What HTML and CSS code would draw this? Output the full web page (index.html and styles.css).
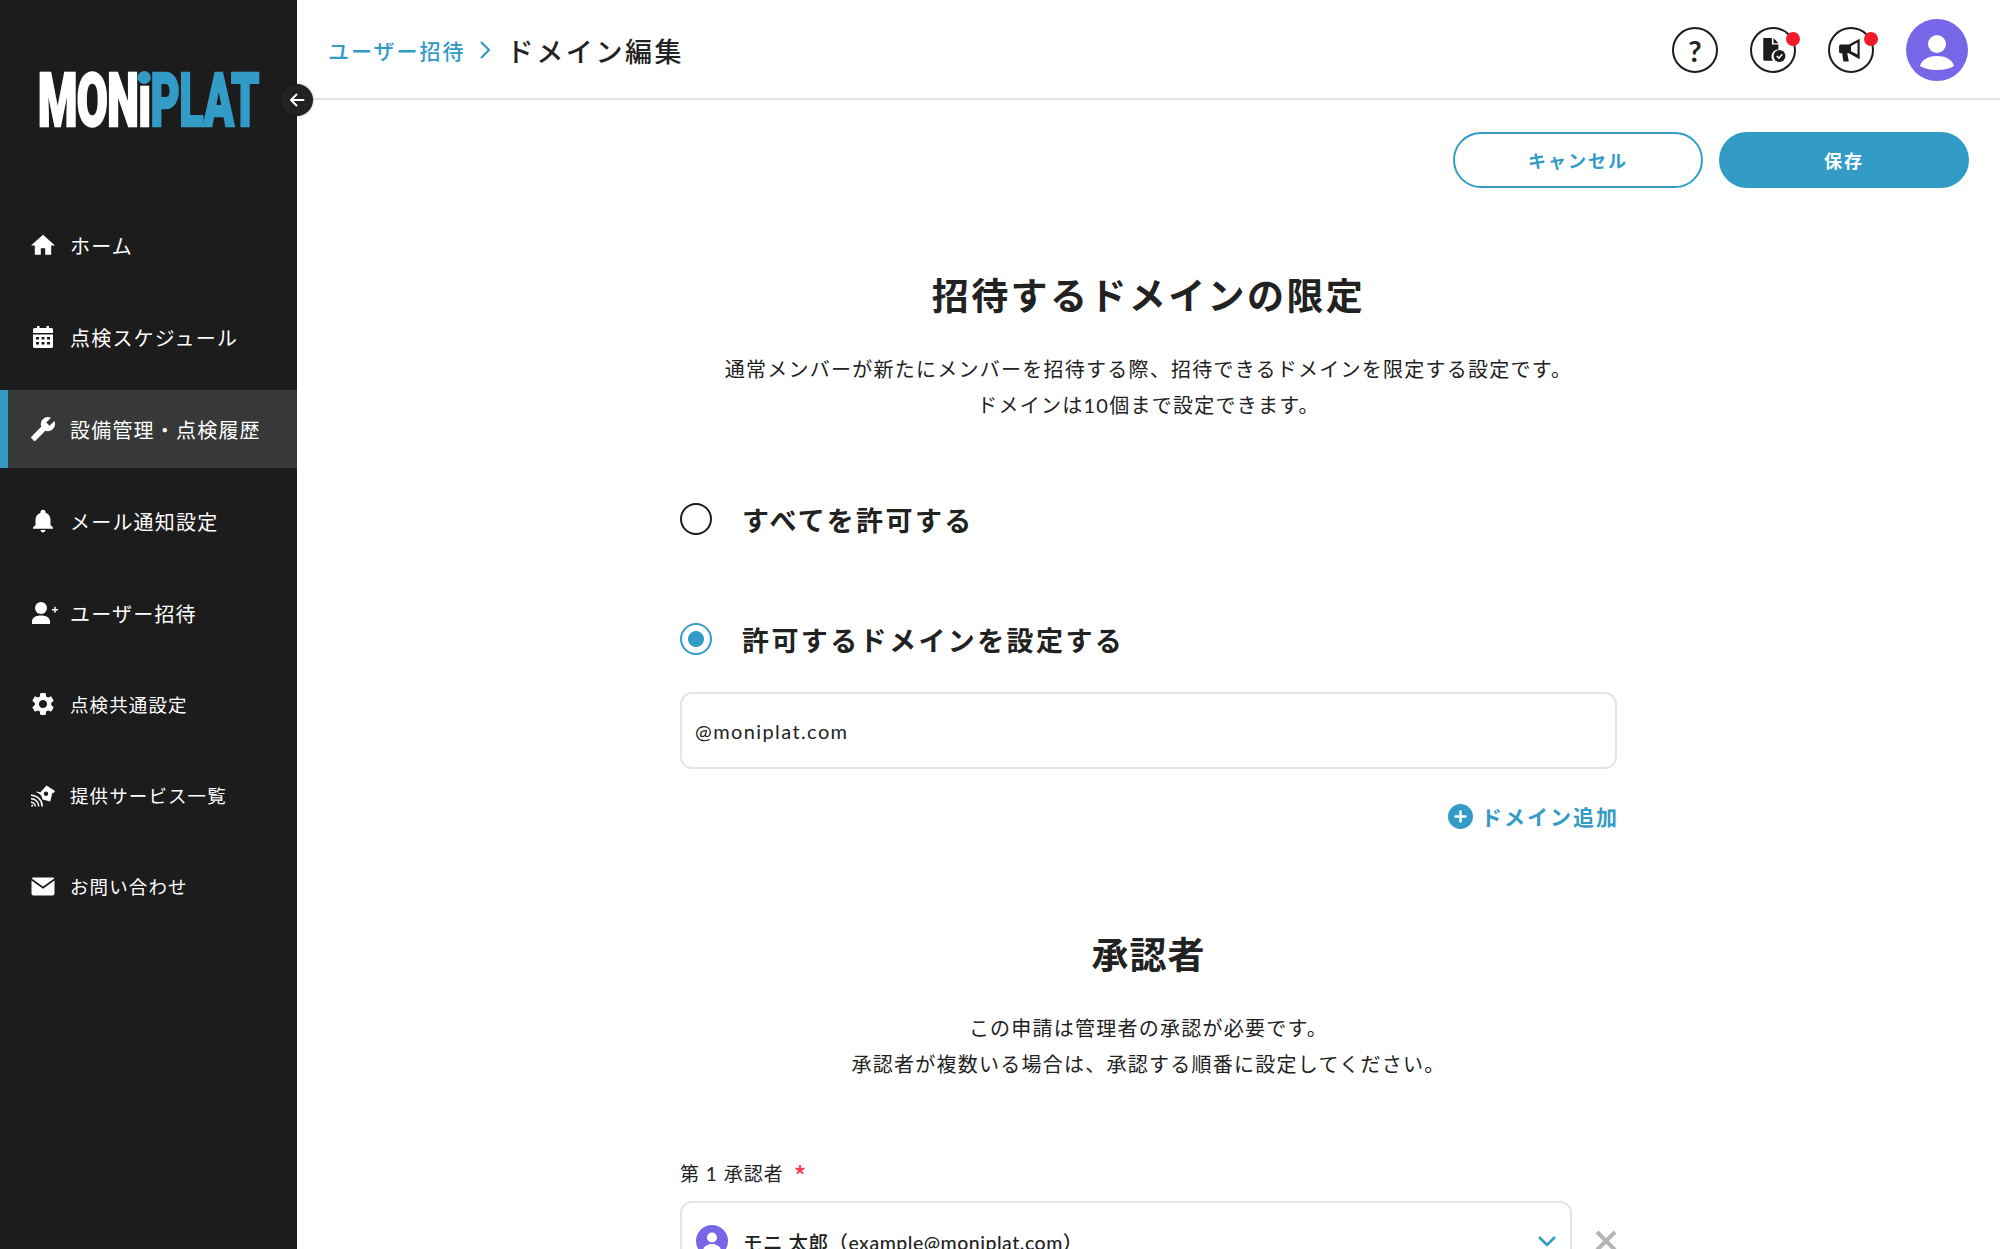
FILE: index.html
```html
<!DOCTYPE html>
<html lang="ja">
<head>
<meta charset="utf-8">
<title>ドメイン編集</title>
<link rel="stylesheet" href="styles.css">
</head>
<body>
<div class="app">
  <aside class="sidebar">
    <div class="logo"><span class="logo-word"><span class="logo-white">MON<span class="logo-i">ı</span></span><span class="logo-blue">PLAT</span></span></div>
    <nav class="nav">
      <a class="nav-item"><svg class="nav-icon" viewBox="1 1 22 22"><path d="M10 21v-6h4v6h5.500v-8.500H23L12 2.500 1 12.500h3.500V21z"/></svg><span>ホーム</span></a>
      <a class="nav-item"><svg class="nav-icon" viewBox="0 0 24 24"><path fill-rule="evenodd" d="M6 1h2.500v2h7V1H18v2h2.500A1.500 1.500 0 0 1 22 4.500V8H2V4.500A1.500 1.500 0 0 1 3.500 3H6zM2 9.500h20v12a1.500 1.500 0 0 1-1.500 1.500h-17A1.500 1.500 0 0 1 2 21.500zM5 12v2.500h3V12zm5.500 0v2.500h3V12zm5.500 0v2.500h3V12zM5 17v2.500h3V17zm5.500 0v2.500h3V17zm5.500 0v2.500h3V17z"/></svg><span>点検スケジュール</span></a>
      <a class="nav-item is-active"><svg class="nav-icon" viewBox="1 1 22 22"><path transform="matrix(-1 0 0 1 24 0)" d="M22.700 19l-9.100-9.100c.9-2.300.4-5-1.500-6.900-2-2-5-2.400-7.400-1.300L9 6 6 9 1.600 4.700C.4 7.100.9 10.100 2.900 12.100c1.900 1.900 4.600 2.400 6.900 1.500l9.100 9.100c.4.400 1 .4 1.400 0l2.300-2.300c.5-.4.5-1.100.1-1.400z"/></svg><span>設備管理・点検履歴</span></a>
      <a class="nav-item"><svg class="nav-icon" viewBox="0 0 24 24"><path d="M12 23.500c1.300 0 2.400-1 2.400-2.500H9.600c0 1.500 1.100 2.500 2.400 2.500zm7.500-7.500v-5c0-3.400-1.800-6.200-4.900-6.900v-.7C14.600 2 13.500.8 12 .8S9.400 2 9.400 3.400v.7C6.300 4.800 4.500 7.600 4.500 11v5L2 18.500v1.200h20v-1.200z"/></svg><span>メール通知設定</span></a>
      <a class="nav-item"><svg class="nav-icon nav-icon-wide" viewBox="0 0 27 24"><circle cx="10" cy="7" r="6"/><path d="M1 23v-2.500C1 16.500 5 14.500 10 14.500s9 2 9 6V23zM21 8h2.300V5.700h1.400V8H27v1.400h-2.300v2.300h-1.400V9.400H21z"/></svg><span>ユーザー招待</span></a>
      <a class="nav-item nav-item-compact"><svg class="nav-icon" viewBox="2 1.500 20 21"><path d="M19.140 12.940c.04-.3.06-.61.06-.94 0-.32-.02-.64-.07-.94l2.030-1.580c.18-.14.23-.41.12-.61l-1.920-3.320c-.12-.22-.37-.29-.59-.22l-2.390.96c-.5-.38-1.030-.7-1.620-.94l-.36-2.540c-.04-.24-.24-.41-.48-.41h-3.840c-.24 0-.43.17-.47.41l-.36 2.540c-.59.24-1.130.57-1.620.94l-2.390-.96c-.22-.08-.47 0-.59.22L2.740 8.870c-.12.21-.08.47.12.61l2.030 1.580c-.05.3-.09.63-.09.94s.02.64.07.94l-2.030 1.580c-.18.14-.23.41-.12.61l1.920 3.320c.12.22.37.29.59.22l2.390-.96c.5.38 1.030.7 1.620.94l.36 2.540c.05.24.24.41.48.41h3.840c.24 0 .44-.17.47-.41l.36-2.540c.59-.24 1.130-.56 1.620-.94l2.390.96c.22.08.47 0 .59-.22l1.920-3.320c.12-.22.07-.47-.12-.61l-2.010-1.580zM12 15.600c-1.980 0-3.600-1.620-3.600-3.600s1.620-3.600 3.600-3.600 3.600 1.620 3.600 3.600-1.620 3.600-3.600 3.600z"/></svg><span>点検共通設定</span></a>
      <a class="nav-item nav-item-compact"><svg class="nav-icon" viewBox="0 0 24 24"><path fill-rule="evenodd" d="M15.500 2.500 24 8l-1.500 2.200-1-.6-2.300 9-7.700-2.100C11 12.500 8.500 10 5.500 9.500l-.2-.9 4.200.6zM15 8.500a2.200 2.200 0 1 0 0 4.400 2.200 2.200 0 0 0 0-4.400z"/><path d="M0 23.500a2 2 0 0 1 2-2v2zM0 18.500a5 5 0 0 1 5 5H3.500A3.500 3.500 0 0 0 0 20zM0 15a8.500 8.500 0 0 1 8.500 8.500H7A7 7 0 0 0 0 16.500zM0 11.500a12 12 0 0 1 12 12h-1.500A10.500 10.500 0 0 0 0 13z"/></svg><span>提供サービス一覧</span></a>
      <a class="nav-item nav-item-compact"><svg class="nav-icon" viewBox="0 0 24 24"><path d="M2.500 3.500h19c.8 0 1.500.4 1.800 1L12 12.500.7 4.500c.3-.6 1-1 1.800-1zM.5 6.500 12 14.700 23.500 6.500v13c0 1.100-.9 2-2 2h-19c-1.100 0-2-.9-2-2z"/></svg><span>お問い合わせ</span></a>
    </nav>
    <button class="collapse" aria-label="閉じる"><svg viewBox="0 0 18 18"><path d="M15.500 9H3M8.500 3.500 3 9l5.500 5.500" fill="none" stroke="#fff" stroke-width="2" stroke-linecap="round" stroke-linejoin="round"/></svg></button>
  </aside>
  <main class="main">
    <header class="topbar">
      <div class="crumbs"><a class="crumb-link">ユーザー招待</a><svg class="crumb-sep" viewBox="0 0 12 20"><path d="M2 2l8 8-8 8" fill="none" stroke="#329bc6" stroke-width="2.200"/></svg><span class="crumb-current">ドメイン編集</span></div>
      <div class="tools">
        <span class="tool tool-help">?</span>
        <span class="tool has-dot"><svg viewBox="0 0 24 24" class="tool-icon"><path d="M3 1h8v6h6v4.500a6.500 6.500 0 0 0-5 10.500H4.500A1.500 1.500 0 0 1 3 20.500zM12.500 1l4.500 4.800h-4.500z" fill="#1c1c1c"/><circle cx="18" cy="17.500" r="5.500" fill="#1c1c1c"/><path d="M15.500 17.500l2 2 3-3.500" fill="none" stroke="#fff" stroke-width="1.400"/></svg></span>
        <span class="tool has-dot"><svg viewBox="0 0 24 24" class="tool-icon"><path d="M1 8.500A1.500 1.500 0 0 1 2.500 7H10l10-5.500v19L10 15H8.500l1.500 7.500H5L3.800 15h-1.300A1.500 1.500 0 0 1 1 13.500z" fill="#1c1c1c"/><path d="M12 8.200 18 5v11.200l-6-3z" fill="#fff"/></svg></span>
        <span class="avatar"><svg viewBox="0 0 62 62"><circle cx="31" cy="25" r="9"/><path d="M14 47c2-7 9-10 17-10s15 3 17 10c-4 2.500-10 4-17 4s-13-1.500-17-4z"/></svg></span>
      </div>
    </header>
    <div class="actions">
      <button class="btn btn-outline">キャンセル</button>
      <button class="btn btn-solid">保存</button>
    </div>
    <section class="form">
      <h1 class="title">招待するドメインの限定</h1>
      <p class="desc">通常メンバーが新たにメンバーを招待する際、招待できるドメインを限定する設定です。<br>ドメインは10個まで設定できます。</p>
      <label class="radio radio-first"><span class="radio-mark"></span><span>すべてを許可する</span></label>
      <label class="radio radio-second"><span class="radio-mark is-on"></span><span>許可するドメインを設定する</span></label>
      <div class="input">@moniplat.com</div>
      <div class="add-row"><a class="add"><svg viewBox="0 0 25 25"><circle cx="12.500" cy="12.500" r="12.500" fill="#329bc6"/><path d="M12.500 7.500v10M7.500 12.500h10" stroke="#fff" stroke-width="2.600" stroke-linecap="round"/></svg><span>ドメイン追加</span></a></div>
      <h2 class="title title-second">承認者</h2>
      <p class="desc">この申請は管理者の承認が必要です。<br>承認者が複数いる場合は、承認する順番に設定してください。</p>
      <div class="field-label">第 1 承認者 <span class="req">*</span></div>
      <div class="select-row">
        <div class="select">
          <span class="mini-avatar"><svg viewBox="0 0 32 32"><circle cx="16" cy="12.500" r="5"/><path d="M7 25c1-4 5-6 9-6s8 2 9 6c-2.500 1.500-5.500 2.200-9 2.200S9.500 26.500 7 25z"/></svg></span>
          <span class="select-text">モニ 太郎（example@moniplat.com）</span>
          <svg class="chevron" viewBox="0 0 20 12"><path d="M2 2l8 8 8-8" fill="none" stroke="#329bc6" stroke-width="2.600"/></svg>
        </div>
        <svg class="remove" viewBox="0 0 24 24"><path d="M3 3l18 18M21 3L3 21" stroke="#b5b5b5" stroke-width="4"/></svg>
      </div>
    </section>
  </main>
</div>
</body>
</html>
```

FILE: styles.css
```css
* { box-sizing: border-box; }
html, body { margin: 0; height: 1249px; overflow: hidden; }
body { background: #fff; color: #222; font-family: Lato, "Noto Sans CJK JP", sans-serif; }
.app { display: flex; height: 1249px; }

.sidebar { position: relative; flex: 0 0 297px; background: #1c1c1c; display: flex; flex-direction: column; }
.logo { height: 206px; padding: 73px 0 0 38px; }
.logo-word { display: block; width: 219px; height: 54px; font: 900 75px/54px Roboto, sans-serif; white-space: nowrap; transform-origin: 0 0; transform: scaleX(.6); letter-spacing: -1px; -webkit-text-stroke: 2.500px currentColor; }
.logo-white { color: #fff; }
.logo-blue { color: #329bc6; }
.logo-i { position: relative; }
.logo-i::after { content: ""; position: absolute; left: -1px; top: 15px; width: 22px; height: 13px; border-radius: 50%; background: #329bc6; }
.nav { display: flex; flex-direction: column; gap: 14px; }
.nav-item { height: 78px; display: flex; align-items: center; gap: 15px; padding-left: 31px; color: #fff; font-size: 20px; letter-spacing: 1.200px; }
.nav-item-compact { font-size: 18.500px; letter-spacing: 1.100px; margin-top: -1px; }
.nav-item.is-active { background: #383838; box-shadow: inset 8px 0 0 #329bc6; }
.nav-icon { width: 24px; height: 24px; fill: #fff; flex: none; }
.nav-icon-wide { width: 27px; margin-right: -3px; }
.collapse { position: absolute; left: 281px; top: 84px; width: 32px; height: 32px; padding: 7px; border: 0; border-radius: 50%; background: #222; box-shadow: 0 0 3px rgba(0,0,0,.3); display: flex; z-index: 2; }
.collapse svg { width: 18px; height: 18px; }

.main { flex: 1; min-width: 0; }
.topbar { height: 100px; border-bottom: 2px solid #e3e3e3; display: flex; align-items: center; justify-content: space-between; padding: 2px 32px 0 31px; }
.crumbs { display: flex; align-items: center; }
.crumb-link { color: #329bc6; font-size: 21px; font-weight: 500; letter-spacing: 2px; }
.crumb-sep { width: 12px; height: 20px; margin: 0 16px 0 13px; }
.crumb-current { font-size: 27px; font-weight: 500; letter-spacing: 2.600px; }
.tools { display: flex; align-items: center; gap: 32px; }
.tool { position: relative; width: 46px; height: 46px; border: 2px solid #1c1c1c; border-radius: 50%; display: flex; align-items: center; justify-content: center; }
.tool-help { font-size: 29px; font-weight: 700; font-family: Lato, sans-serif; line-height: 1; }
.tool-icon { width: 26px; height: 26px; }
.has-dot::after { content: ""; position: absolute; right: -6px; top: 3px; width: 14px; height: 14px; border-radius: 50%; background: #ee1c25; }
.avatar { width: 62px; height: 62px; border-radius: 50%; background: #7866e8; }
.avatar svg { display: block; fill: #fff; }

.actions { display: flex; justify-content: flex-end; gap: 16px; padding: 32px 31px 0 0; }
.btn { width: 250px; height: 56px; border-radius: 28px; border: 2px solid #329bc6; font: 700 18px "Noto Sans CJK JP", sans-serif; letter-spacing: 2px; }
.btn-outline { background: #fff; color: #329bc6; }
.btn-solid { background: #329bc6; color: #fff; }

.form { width: 937px; margin: 0 auto; }
.title { margin: 0; padding-top: 81px; text-align: center; font-size: 37px; font-weight: 700; line-height: 54px; letter-spacing: 2.400px; }
.title-second { padding-top: 0; margin-top: 97px; letter-spacing: 1px; }
.desc { margin: 28px 0 0; text-align: center; font-size: 20px; line-height: 36px; letter-spacing: 1.250px; }
.radio { display: flex; align-items: center; gap: 30px; height: 40px; font-size: 27px; font-weight: 700; letter-spacing: 2.400px; }
.radio-first { margin-top: 76px; }
.radio-second { margin-top: 80px; }
.radio-mark { width: 32px; height: 32px; border: 2px solid #1c1c1c; border-radius: 50%; flex: none; background: #fff; }
.radio-mark.is-on { border-color: #329bc6; background: radial-gradient(circle, #329bc6 0 7.500px, #fff 8.500px); }
.input { height: 77px; margin-top: 33px; border: 2px solid #e5e5e5; border-radius: 12px; padding: 0 13px; display: flex; align-items: center; font-size: 20px; letter-spacing: 1.400px; }
.add-row { display: flex; justify-content: flex-end; margin-top: 32px; }
.add { display: flex; align-items: center; gap: 8px; color: #329bc6; font-size: 21px; font-weight: 700; letter-spacing: 2px; height: 30px; margin-right: -2px; }
.add svg { width: 25px; height: 25px; }
.field-label { margin-top: 78px; font-size: 19px; line-height: 27px; letter-spacing: 1px; }
.req { color: #e8404f; margin-left: 4px; font: 500 26px/0 "Noto Sans CJK JP", sans-serif; vertical-align: -5px; }
.select-row { display: flex; align-items: center; gap: 22px; margin-top: 14px; }
.select { flex: 1; height: 80px; border: 2px solid #e5e5e5; border-radius: 12px; padding: 0 13px 0 14px; display: flex; align-items: center; gap: 15px; }
.mini-avatar { width: 32px; height: 32px; border-radius: 50%; background: #7866e8; flex: none; }
.mini-avatar svg { display: block; fill: #fff; }
.select-text { flex: 1; font-size: 19.500px; font-weight: 500; letter-spacing: .5px; }
.chevron { width: 20px; height: 12px; }
.remove { width: 24px; height: 24px; flex: none; margin-right: -1px; }
```
